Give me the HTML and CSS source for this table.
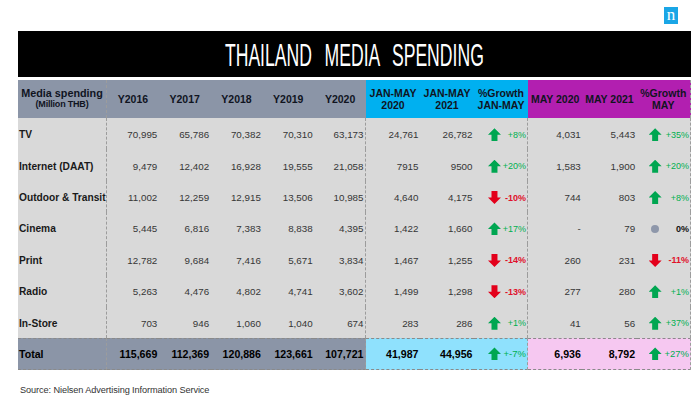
FILE: index.html
```html
<!DOCTYPE html>
<html lang="en">
<head>
<meta charset="utf-8">
<title>Thailand Media Spending</title>
<link rel="stylesheet" href="styles.css">
</head>
<body>
<div class="page">
  <div class="top"><div class="logo">n</div></div>
  <div class="title"><span class="title-text">THAILAND MEDIA SPENDING</span></div>
  <div class="grid">
    <div class="h hg sep lab-h"><span class="l1">Media spending</span><span class="l2">(Million THB)</span></div>
    <div class="h hg">Y2016</div>
    <div class="h hg">Y2017</div>
    <div class="h hg">Y2018</div>
    <div class="h hg">Y2019</div>
    <div class="h hg">Y2020</div>
    <div class="h hb"><span>JAN-MAY</span><span>2020</span></div>
    <div class="h hb"><span>JAN-MAY</span><span>2021</span></div>
    <div class="h hb"><span>%Growth</span><span>JAN-MAY</span></div>
    <div class="h hm">MAY 2020</div>
    <div class="h hm">MAY 2021</div>
    <div class="h hm sep"><span>%Growth</span><span>MAY</span></div>

    <div class="c lab sep">TV</div>
    <div class="c num">70,995</div><div class="c num">65,786</div><div class="c num">70,382</div><div class="c num">70,310</div><div class="c num sep">63,173</div>
    <div class="c num">24,761</div><div class="c num">26,782</div>
    <div class="c gr sep"><i class="ar up"></i><span class="pc pos">+8%</span></div>
    <div class="c num">4,031</div><div class="c num">5,443</div>
    <div class="c gr gr2 sep"><i class="ar up"></i><span class="pc pos">+35%</span></div>

    <div class="c lab sep">Internet (DAAT)</div>
    <div class="c num">9,479</div><div class="c num">12,402</div><div class="c num">16,928</div><div class="c num">19,555</div><div class="c num sep">21,058</div>
    <div class="c num">7915</div><div class="c num">9500</div>
    <div class="c gr sep"><i class="ar up"></i><span class="pc pos">+20%</span></div>
    <div class="c num">1,583</div><div class="c num">1,900</div>
    <div class="c gr gr2 sep"><i class="ar up"></i><span class="pc pos">+20%</span></div>

    <div class="c lab sep">Outdoor &amp; Transit</div>
    <div class="c num">11,002</div><div class="c num">12,259</div><div class="c num">12,915</div><div class="c num">13,506</div><div class="c num sep">10,985</div>
    <div class="c num">4,640</div><div class="c num">4,175</div>
    <div class="c gr sep"><i class="ar down"></i><span class="pc neg">-10%</span></div>
    <div class="c num">744</div><div class="c num">803</div>
    <div class="c gr gr2 sep"><i class="ar up"></i><span class="pc pos">+8%</span></div>

    <div class="c lab sep">Cinema</div>
    <div class="c num">5,445</div><div class="c num">6,816</div><div class="c num">7,383</div><div class="c num">8,838</div><div class="c num sep">4,395</div>
    <div class="c num">1,422</div><div class="c num">1,660</div>
    <div class="c gr sep"><i class="ar up"></i><span class="pc pos">+17%</span></div>
    <div class="c num">-</div><div class="c num">79</div>
    <div class="c gr gr2 sep"><i class="dot"></i><span class="pc zero">0%</span></div>

    <div class="c lab sep">Print</div>
    <div class="c num">12,782</div><div class="c num">9,684</div><div class="c num">7,416</div><div class="c num">5,671</div><div class="c num sep">3,834</div>
    <div class="c num">1,467</div><div class="c num">1,255</div>
    <div class="c gr sep"><i class="ar down"></i><span class="pc neg">-14%</span></div>
    <div class="c num">260</div><div class="c num">231</div>
    <div class="c gr gr2 sep"><i class="ar down"></i><span class="pc neg">-11%</span></div>

    <div class="c lab sep">Radio</div>
    <div class="c num">5,263</div><div class="c num">4,476</div><div class="c num">4,802</div><div class="c num">4,741</div><div class="c num sep">3,602</div>
    <div class="c num">1,499</div><div class="c num">1,298</div>
    <div class="c gr sep"><i class="ar down"></i><span class="pc neg">-13%</span></div>
    <div class="c num">277</div><div class="c num">280</div>
    <div class="c gr gr2 sep"><i class="ar up"></i><span class="pc pos">+1%</span></div>

    <div class="c lab sep">In-Store</div>
    <div class="c num">703</div><div class="c num">946</div><div class="c num">1,060</div><div class="c num">1,040</div><div class="c num sep">674</div>
    <div class="c num">283</div><div class="c num">286</div>
    <div class="c gr sep"><i class="ar up"></i><span class="pc pos">+1%</span></div>
    <div class="c num">41</div><div class="c num">56</div>
    <div class="c gr gr2 sep"><i class="ar up"></i><span class="pc pos">+37%</span></div>

    <div class="t tg lab sep">Total</div>
    <div class="t tg num">115,669</div><div class="t tg num">112,369</div><div class="t tg num">120,886</div><div class="t tg num">123,661</div><div class="t tg num sep">107,721</div>
    <div class="t tb num">41,987</div><div class="t tb num">44,956</div>
    <div class="t tb gr sep"><i class="ar up"></i><span class="pc pos big">+-7%</span></div>
    <div class="t tm num">6,936</div><div class="t tm num">8,792</div>
    <div class="t tm gr gr2 sep"><i class="ar up"></i><span class="pc pos big">+27%</span></div>
  </div>
  <p class="source">Source: Nielsen Advertising Information Service</p>
</div>
</body>
</html>
```

FILE: styles.css
```css
* { box-sizing: border-box; }
html, body { margin: 0; padding: 0; background: #ffffff; }
body { font-family: "Liberation Sans", Arial, sans-serif; color: #333333; }

.page { width: 700px; height: 405px; overflow: hidden; display: flex; flex-direction: column; }

.top { height: 31px; display: flex; justify-content: flex-end; align-items: flex-start; padding: 7px 22px 0 0; }
.logo {
  width: 14px; height: 17px; background: #1aa6e6; color: #ffffff;
  font-family: "Liberation Serif", serif; font-size: 17px; line-height: 14px;
  text-align: center; padding-top: 1px;
}

.title {
  height: 46px; margin: 0 9px 0 18px; background: #000000;
  display: flex; align-items: center; justify-content: center; overflow: hidden;
}
.title-text {
  display: inline-block; color: #ffffff; font-size: 32px; line-height: 32px;
  word-spacing: 14px; transform: scaleX(0.55); white-space: nowrap; padding-top: 1px;
}

.grid {
  margin: 3px 0 0 18px; width: 673px;
  display: grid;
  grid-template-columns: 89px repeat(5, 51.8px) repeat(3, 54px) repeat(3, 54.33px);
  grid-template-rows: 38px repeat(7, 31.43px) 32px;
}

.h {
  display: flex; flex-direction: column; align-items: center; justify-content: center;
  font-weight: bold; font-size: 10.5px; line-height: 12px; color: #10141f; white-space: nowrap;
}
.hg { background: #8b95a7; }
.hb { background: #00b0f0; }
.hm { background: #b21fb0; }
.lab-h .l1 { font-size: 10.8px; line-height: 11px; }
.lab-h .l2 { font-size: 9px; line-height: 11px; letter-spacing: -0.2px; }

.sep { border-right: 1px dashed #9c9c9c; }

.c { background: #d9d9d9; display: flex; align-items: center; padding-top: 2px; }
.lab { font-weight: bold; font-size: 10.2px; color: #1a1a1a; padding-left: 1px; white-space: nowrap; }
.num { justify-content: flex-end; padding-right: 1.5px; font-size: 9.8px; color: #363636; }

.gr { padding-left: 14px; padding-right: 1px; }
.gr2 { padding-left: 12px; }
.pc { margin-left: auto; font-size: 9px; }
.pos { color: #00b050; }
.neg { color: #e0102a; font-weight: bold; }
.zero { color: #111111; font-weight: bold; }
.big { font-size: 9.5px; }

.ar { display: block; width: 13px; height: 13px; }
.up { background: #00a651; clip-path: polygon(50% 0, 100% 50%, 73% 50%, 73% 100%, 27% 100%, 27% 50%, 0 50%); }
.down { background: #e3001b; clip-path: polygon(27% 0, 73% 0, 73% 50%, 100% 50%, 50% 100%, 0 50%, 27% 50%); }
.dot { display: block; width: 8px; height: 8px; border-radius: 50%; background: #8e97aa; margin-left: 2.5px; }

.t {
  display: flex; align-items: center;
  border-top: 1px dashed #8a8a8a; border-bottom: 1px dashed #8a8a8a;
}
.t.num { font-weight: bold; font-size: 10.6px; color: #000000; }
.t.lab { font-size: 10.6px; color: #000000; }
.tg { background: #8b95a7; }
.tb { background: #8fe1fd; }
.tm { background: #f6c8f1; }

.source {
  margin: 15px 0 0 20px; font-size: 9.2px; line-height: 10px; color: #333333; letter-spacing: -0.1px;
}
```
